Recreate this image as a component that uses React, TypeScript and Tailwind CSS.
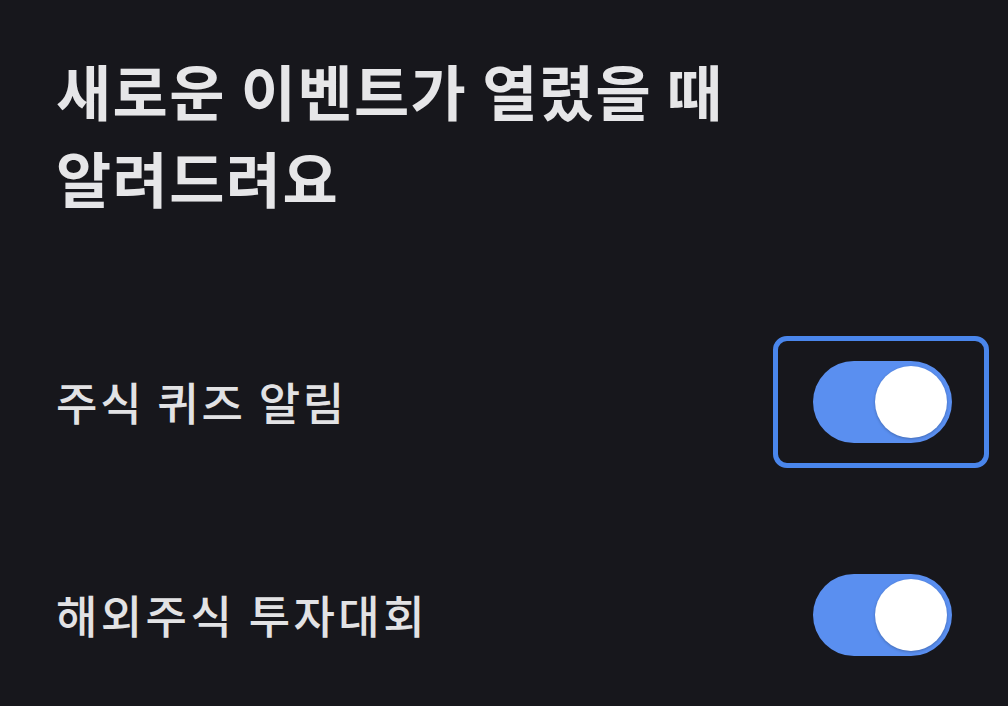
import { useState } from "react";

const font = { fontFamily: '"Noto Sans CJK KR", "Noto Sans", sans-serif' };

function Toggle({ on, focused, onClick }: { on: boolean; focused?: boolean; onClick: () => void }) {
  return (
    <button
      onClick={onClick}
      className={`rounded-[14px] border-[5px] pl-[35px] pr-[32px] py-[20px] ${
        focused ? "border-[#4a86ec]" : "border-transparent"
      }`}
    >
      <div
        className={`flex h-[82px] w-[139px] items-center rounded-full px-[5px] ${
          on ? "justify-end bg-[#5a8ff0]" : "justify-start bg-[#3a3a42]"
        }`}
      >
        <div className="h-[72px] w-[72px] rounded-full bg-white shadow-[0_1px_3px_rgba(0,0,0,0.25)]" />
      </div>
    </button>
  );
}

export default function App() {
  const [quiz, setQuiz] = useState(true);
  const [contest, setContest] = useState(true);

  return (
    <div className="h-[706px] w-full overflow-hidden bg-[#17171c] text-[#e6e6e8]" style={font}>
      <div className="pl-[56px] pr-[19px] pt-[46px]">
        <h1 className="text-[60px] font-bold leading-[87px] tracking-[1.4px]">
          새로운 이벤트가 열렸을 때
          <br />
          알려드려요
        </h1>

        <div className="mt-[116px] flex items-center justify-between">
          <span className="text-[45px] font-medium tracking-[2.8px] text-[#e2e2e4]">주식 퀴즈 알림</span>
          <Toggle on={quiz} focused onClick={() => setQuiz(!quiz)} />
        </div>

        <div className="mt-[81px] flex items-center justify-between">
          <span className="text-[45px] font-medium tracking-[3.4px] text-[#e2e2e4]">해외주식 투자대회</span>
          <Toggle on={contest} onClick={() => setContest(!contest)} />
        </div>
      </div>
    </div>
  );
}
